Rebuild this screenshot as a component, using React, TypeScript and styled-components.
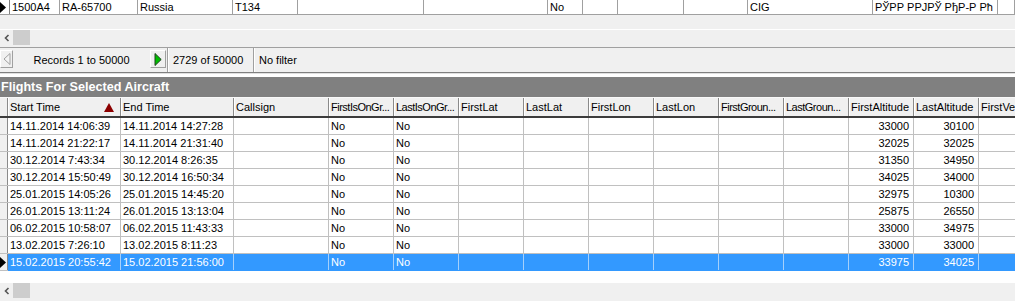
import React from 'react';
import styled, { createGlobalStyle } from 'styled-components';

const Global = createGlobalStyle`
  html, body { margin: 0; padding: 0; background: #f0f0f0; }
  body {
    font-family: "Liberation Sans", Arial, sans-serif;
    font-size: 11px;
    color: #000;
    overflow: hidden;
  }
`;

const Page = styled.div`
  width: 1015px;
  height: 301px;
  display: flex;
  flex-direction: column;
  overflow: hidden;
  background: #f0f0f0;
`;

/* ---------- top (master) grid ---------- */
const TopGrid = styled.div`
  height: 29px;
  border-bottom: 1px solid #ffffff;
  background: #f0f0f0;
  overflow: hidden;
`;

const TopRow = styled.div`
  display: grid;
  grid-template-columns: 10px 50px 78px 95px 65px 126px 124px 35px 35px 66px 64px 125px 125px 1fr;
  height: 14px;
  background: #fff;
  border-bottom: 1px solid #a0a0a0;
`;

const TopCell = styled.div`
  border-right: 1px solid #a0a0a0;
  padding-left: 2px;
  line-height: 14px;
  white-space: nowrap;
  overflow: hidden;
  display: flex;
  align-items: center;
`;

const IndicatorCell = styled.div`
  display: flex;
  align-items: center;
  border-right: 1px solid #808080;
`;

/* ---------- scrollbar ---------- */
const ScrollBar = styled.div<{ $border?: boolean }>`
  height: 17px;
  display: flex;
  align-items: flex-start;
  background: #f0f0f0;
  border-bottom: ${(p) => (p.$border ? '1px solid #a0a0a0' : '1px solid #f0f0f0')};
  flex-shrink: 0;
`;

const ArrowBox = styled.div`
  width: 13px;
  height: 15px;
  display: flex;
  align-items: center;
  justify-content: center;
`;

const Thumb = styled.div`
  width: 17px;
  height: 15px;
  background: #cdcdcd;
`;

/* ---------- navigator ---------- */
const NavBar = styled.div`
  height: 24px;
  display: flex;
  align-items: stretch;
  background: #f0f0f0;
  border-bottom: 1px solid #808080;
  box-shadow: 0 1px 0 #e0e0e0;
  flex-shrink: 0;
`;

const NavButton = styled.div<{ $w: number }>`
  width: ${(p) => p.$w}px;
  height: 18px;
  margin-top: 2px;
  box-sizing: border-box;
  border: 1px solid;
  border-color: #ffffff #a0a0a0 #a0a0a0 #ffffff;
  display: flex;
  align-items: center;
  justify-content: center;
`;

const NavLabel = styled.div<{ $w: number }>`
  width: ${(p) => p.$w}px;
  display: flex;
  align-items: center;
  justify-content: center;
  white-space: nowrap;
  font-size: 11px;
`;

const NavPanel = styled.div<{ $w?: number }>`
  ${(p) => (p.$w ? `width: ${p.$w}px;` : 'flex: 1;')}
  display: flex;
  align-items: center;
  padding-left: 5px;
  border-left: 1px solid #a0a0a0;
  box-shadow: inset 1px 0 0 #ffffff;
  white-space: nowrap;
`;

const Gap = styled.div`
  height: 3px;
  background: #ffffff;
  margin-top: 1px;
  flex-shrink: 0;
`;

/* ---------- caption band ---------- */
const Band = styled.div`
  height: 20px;
  background: #808080;
  color: #ffffff;
  font-weight: bold;
  font-size: 12.6px;
  line-height: 20px;
  padding-left: 1px;
  border-bottom: 1px solid #f8f8f8;
  flex-shrink: 0;
`;

/* ---------- detail grid ---------- */
const COLS = '8px 113px 113px 95px repeat(11, 65px)';

const Grid = styled.div`
  flex: 1;
  background: #ffffff;
  overflow: hidden;
`;

const HeaderRow = styled.div`
  display: grid;
  grid-template-columns: ${COLS};
  height: 18px;
  border-bottom: 2px solid #3c3c3c;
  background: #f0f0f0;
`;

const HeaderCell = styled.div<{ $sorted?: boolean; $tight?: boolean }>`
  box-sizing: border-box;
  border-left: 1px solid #ffffff;
  border-right: 1px solid #8a8a8a;
  padding: ${(p) => (p.$sorted ? '0 6px 0 1px' : '0 0 0 1px')};
  letter-spacing: ${(p) => (p.$tight ? '-0.5px' : '0')};
  display: flex;
  align-items: center;
  justify-content: space-between;
  white-space: nowrap;
  overflow: hidden;
`;

const HeaderIndicator = styled.div`
  border-right: 1px solid #8a8a8a;
  background: #f0f0f0;
`;

const Row = styled.div<{ $sel?: boolean }>`
  display: grid;
  grid-template-columns: ${COLS};
  height: 16px;
  border-bottom: 1px solid ${(p) => (p.$sel ? '#3399ff' : '#c0c0c0')};
  background: ${(p) => (p.$sel ? '#3399ff' : '#ffffff')};
  color: ${(p) => (p.$sel ? '#ffffff' : '#000000')};
`;

const RowIndicator = styled.div`
  background: #f0f0f0;
  border-right: 1px solid #8a8a8a;
  display: flex;
  align-items: center;
  box-shadow: 0 1px 0 #c0c0c0;
`;

const Cell = styled.div<{ $right?: boolean; $sel?: boolean }>`
  box-sizing: border-box;
  border-right: 1px solid ${(p) => (p.$sel ? '#a6d0fb' : '#c0c0c0')};
  padding: ${(p) => (p.$right ? '0 4px 0 0' : '0 0 0 2px')};
  text-align: ${(p) => (p.$right ? 'right' : 'left')};
  line-height: 16px;
  white-space: nowrap;
  overflow: hidden;
`;

const Spacer = styled.div`
  height: 12px;
  background: #ffffff;
  flex-shrink: 0;
`;

/* ---------- icons ---------- */
const RowMarker = () => (
  <svg width="6" height="11" viewBox="0 0 6 11">
    <path d="M0 0 L6 5.5 L0 11 Z" fill="#000" />
  </svg>
);

const Chevron = () => (
  <svg width="8" height="8" viewBox="0 0 8 8">
    <path d="M5.5 1 L2.5 4 L5.5 7" fill="none" stroke="#555" strokeWidth="1.6" />
  </svg>
);

const PrevTri = () => (
  <svg width="8" height="12" viewBox="0 0 8 12">
    <path d="M7 0.5 L1 6 L7 11.5 Z" fill="#f4f4f4" stroke="#a0a0a0" strokeWidth="1" />
  </svg>
);

const NextTri = () => (
  <svg width="8" height="13" viewBox="0 0 8 13">
    <path d="M1 0.5 L7.2 6.5 L1 12.5 Z" fill="#00c000" stroke="#204020" strokeWidth="1" />
  </svg>
);

const SortUp = () => (
  <svg width="10" height="9" viewBox="0 0 10 9">
    <path d="M5 0 L10 9 L0 9 Z" fill="#8c0000" />
  </svg>
);

/* ---------- data ---------- */
const topCells = ['1500A4', 'RA-65700', 'Russia', 'T134', '', '', 'No', '', '', '', 'CIG', 'РЎРР РРЈРЎ РђР-Р Рћ', ''];

const headers = [
  'Start Time',
  'End Time',
  'Callsign',
  'FirstIsOnGr...',
  'LastIsOnGr...',
  'FirstLat',
  'LastLat',
  'FirstLon',
  'LastLon',
  'FirstGroun...',
  'LastGroun...',
  'FirstAltitude',
  'LastAltitude',
  'FirstVer',
];

const flights: [string, string, string, string][] = [
  ['14.11.2014 14:06:39', '14.11.2014 14:27:28', '33000', '30100'],
  ['14.11.2014 21:22:17', '14.11.2014 21:31:40', '32025', '32025'],
  ['30.12.2014 7:43:34', '30.12.2014 8:26:35', '31350', '34950'],
  ['30.12.2014 15:50:49', '30.12.2014 16:50:34', '34025', '34000'],
  ['25.01.2015 14:05:26', '25.01.2015 14:45:20', '32975', '10300'],
  ['26.01.2015 13:11:24', '26.01.2015 13:13:04', '25875', '26550'],
  ['06.02.2015 10:58:07', '06.02.2015 11:43:33', '33000', '34975'],
  ['13.02.2015 7:26:10', '13.02.2015 8:11:23', '33000', '33000'],
  ['15.02.2015 20:55:42', '15.02.2015 21:56:00', '33975', '34025'],
];

export default function App() {
  return (
    <Page>
      <Global />
      <TopGrid>
        <TopRow>
          <IndicatorCell>
            <RowMarker />
          </IndicatorCell>
          {topCells.map((c, i) => (
            <TopCell key={i}>{c}</TopCell>
          ))}
        </TopRow>
      </TopGrid>
      <ScrollBar $border>
        <ArrowBox>
          <Chevron />
        </ArrowBox>
        <Thumb />
      </ScrollBar>
      <NavBar>
        <NavButton $w={13}>
          <PrevTri />
        </NavButton>
        <NavLabel $w={137}>Records 1 to 50000</NavLabel>
        <NavButton $w={16}>
          <NextTri />
        </NavButton>
        <NavPanel $w={80} style={{ marginLeft: 1 }}>2729 of 50000</NavPanel>
        <NavPanel>No filter</NavPanel>
      </NavBar>
      <Gap />
      <Band>Flights For Selected Aircraft</Band>
      <Grid>
        <HeaderRow>
          <HeaderIndicator />
          {headers.map((h, i) => (
            <HeaderCell key={h} $sorted={i === 0} $tight={h.endsWith('...')}>
              <span>{h}</span>
              {i === 0 && <SortUp />}
            </HeaderCell>
          ))}
        </HeaderRow>
        {flights.map((f, r) => {
          const sel = r === flights.length - 1;
          return (
            <Row key={r} $sel={sel}>
              <RowIndicator>{sel && <RowMarker />}</RowIndicator>
              <Cell $sel={sel}>{f[0]}</Cell>
              <Cell $sel={sel}>{f[1]}</Cell>
              <Cell $sel={sel}></Cell>
              <Cell $sel={sel}>No</Cell>
              <Cell $sel={sel}>No</Cell>
              <Cell $sel={sel}></Cell>
              <Cell $sel={sel}></Cell>
              <Cell $sel={sel}></Cell>
              <Cell $sel={sel}></Cell>
              <Cell $sel={sel}></Cell>
              <Cell $sel={sel}></Cell>
              <Cell $sel={sel} $right>{f[2]}</Cell>
              <Cell $sel={sel} $right>{f[3]}</Cell>
              <Cell $sel={sel}></Cell>
            </Row>
          );
        })}
        <Spacer />
      </Grid>
      <ScrollBar>
        <ArrowBox>
          <Chevron />
        </ArrowBox>
        <Thumb />
      </ScrollBar>
    </Page>
  );
}
